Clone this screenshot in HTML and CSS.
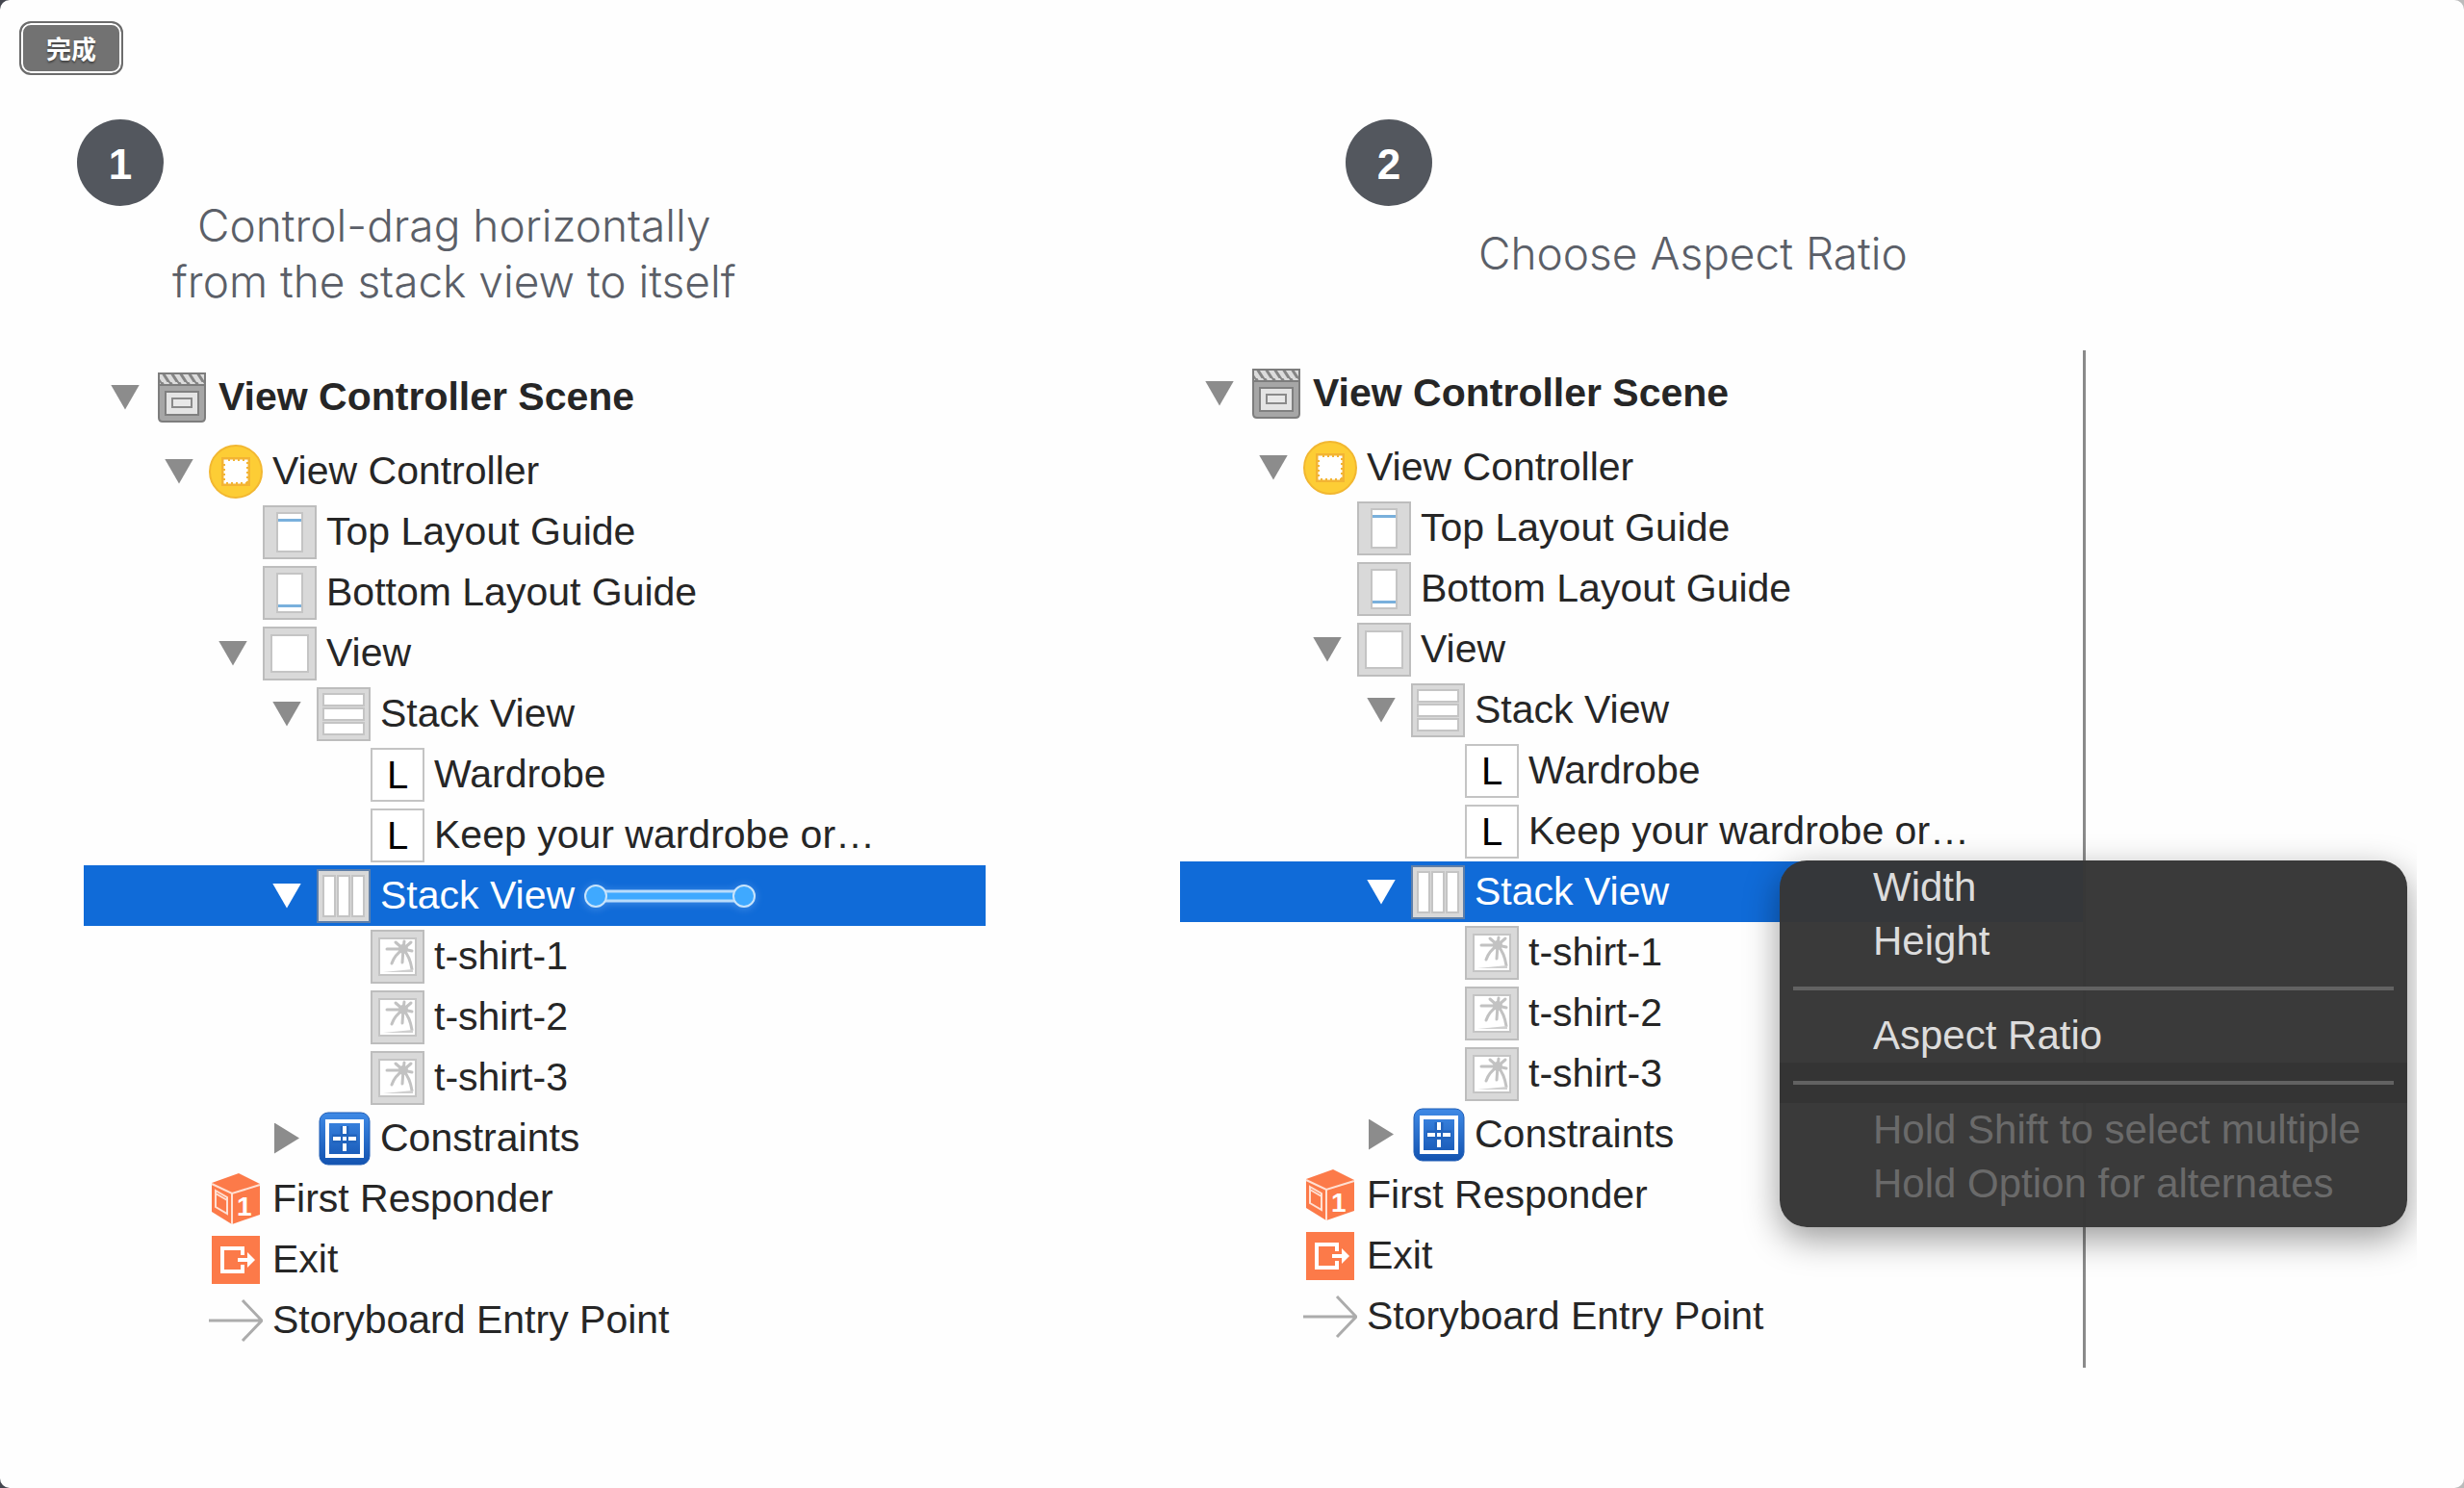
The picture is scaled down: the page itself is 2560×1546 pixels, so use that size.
FILE: index.html
```
<!DOCTYPE html>
<html lang="zh-CN">
<head>
  <meta charset="UTF-8">
  <meta name="viewport" content="width=device-width, initial-scale=1.0">
  <title>Aspect Ratio</title>
  <link rel="stylesheet" href="styles.css">
</head>
<body>
  <!-- Icon set -->
  <svg class="sprite" width="0" height="0" aria-hidden="true">
    <defs>
      <linearGradient id="blue" x1="0" y1="0" x2="0" y2="1">
        <stop offset="0" stop-color="#3f8ae6"/>
        <stop offset="1" stop-color="#1353b0"/>
      </linearGradient>
      <pattern id="stripes" width="9" height="12" patternUnits="userSpaceOnUse">
        <rect width="9" height="12" fill="#dcdcdc"/>
        <path d="M-3 -1 L6 13 M6 -1 L15 13" stroke="#858585" stroke-width="3"/>
      </pattern>
    </defs>
    <symbol id="i-scene" viewBox="0 0 56 56">
      <path d="M4 3h48v46q0 4-4 4H8q-4 0-4-4z" fill="#a6a6a6" stroke="#7d7d7d" stroke-width="2"/>
      <rect x="5" y="4" width="46" height="10" fill="url(#stripes)"/>
      <path d="M4 3h48M4 15h48" stroke="#7d7d7d" stroke-width="2"/>
      <rect x="11" y="22" width="34" height="24" fill="#e4e4e4" stroke="#808080" stroke-width="2"/>
      <rect x="18" y="29" width="20" height="9" fill="#e8e8e8" stroke="#8a8a8a" stroke-width="2"/>
    </symbol>
    <symbol id="i-controller" viewBox="0 0 56 56">
      <circle cx="28" cy="28" r="27" fill="#fdcd35" stroke="#f2b731" stroke-width="2"/>
      <rect x="13" y="13" width="30" height="30" fill="#f3b433"/>
      <rect x="17" y="17" width="22" height="22" fill="#fff" stroke="#fff" stroke-width="3" stroke-dasharray="3 2"/>
    </symbol>
    <symbol id="i-top" viewBox="0 0 56 56">
      <rect x="1" y="1" width="54" height="54" fill="#d9d9d9" stroke="#bdbdbd" stroke-width="2"/>
      <rect x="15" y="8" width="26" height="40" fill="#fff" stroke="#c4c4c4" stroke-width="2"/>
      <rect x="16" y="14" width="24" height="3" fill="#79b0dc"/>
    </symbol>
    <symbol id="i-bottom" viewBox="0 0 56 56">
      <rect x="1" y="1" width="54" height="54" fill="#d9d9d9" stroke="#bdbdbd" stroke-width="2"/>
      <rect x="15" y="8" width="26" height="40" fill="#fff" stroke="#c4c4c4" stroke-width="2"/>
      <rect x="16" y="40" width="24" height="3" fill="#79b0dc"/>
    </symbol>
    <symbol id="i-view" viewBox="0 0 56 56">
      <rect x="1" y="1" width="54" height="54" fill="#d9d9d9" stroke="#bdbdbd" stroke-width="2"/>
      <rect x="9" y="9" width="38" height="38" fill="#fff" stroke="#c4c4c4" stroke-width="2"/>
    </symbol>
    <symbol id="i-vstack" viewBox="0 0 56 56">
      <rect x="1" y="1" width="54" height="54" fill="#d9d9d9" stroke="#bdbdbd" stroke-width="2"/>
      <g fill="#fff" stroke="#c4c4c4" stroke-width="2">
        <rect x="7" y="7" width="42" height="12"/>
        <rect x="7" y="22" width="42" height="12"/>
        <rect x="7" y="37" width="42" height="12"/>
      </g>
    </symbol>
    <symbol id="i-hstack" viewBox="0 0 56 56">
      <rect x="1" y="1" width="54" height="54" fill="#d9d9d9" stroke="#5f7fa8" stroke-width="2"/>
      <g fill="#fff" stroke="#c4c4c4" stroke-width="2">
        <rect x="7" y="7" width="12" height="42"/>
        <rect x="22" y="7" width="12" height="42"/>
        <rect x="37" y="7" width="12" height="42"/>
      </g>
    </symbol>
    <symbol id="i-image" viewBox="0 0 56 56">
      <rect x="1" y="1" width="54" height="54" fill="#d9d9d9" stroke="#bdbdbd" stroke-width="2"/>
      <rect x="9" y="9" width="38" height="38" fill="#fff" stroke="#c4c4c4" stroke-width="2"/>
      <g fill="none" stroke="#c2c2c2" stroke-width="3" stroke-linecap="round">
        <path d="M34 20L17 20M34 20L26 13M34 20L35 12M34 20L42 13M34 20L43 22M34 20Q25 26 22 35M34 20L33 34"/>
        <path d="M34 20Q41 28 43 41"/>
      </g>
      <circle cx="34" cy="20" r="5" fill="#c2c2c2"/>
      <path d="M13 44L44 41V44z" fill="#cfcfcf"/>
    </symbol>
    <symbol id="i-constraints" viewBox="0 0 56 56">
      <rect x="3" y="1" width="52" height="54" rx="9" fill="url(#blue)" stroke="#1f5cb5"/>
      <rect x="11" y="10" width="36" height="36" fill="none" stroke="#fff" stroke-width="4"/>
      <path d="M16 28h26M29 15v26" stroke="#2264bd" stroke-width="9"/>
      <path d="M17 28h8M33 28h8M29 15v8M29 33v8M27 28h4" stroke="#fff" stroke-width="4"/>
    </symbol>
    <symbol id="i-responder" viewBox="0 0 56 56">
      <path d="M31 1L53 12V44L24 54L3 41V11z" fill="#fc7a49"/>
      <path d="M3 12L24 22L53 13M24 22V54" fill="none" stroke="#ffe0d3" stroke-width="2"/>
      <path d="M7 19L19 26V43L7 36zM7 22L19 29" fill="none" stroke="#ffe0d3" stroke-width="2"/>
      <text x="29" y="45" class="cube-digit">1</text>
    </symbol>
    <symbol id="i-exit" viewBox="0 0 56 56">
      <rect x="3" y="3" width="50" height="50" fill="#fc7a49"/>
      <path d="M35 23V16H14V40H35V33" fill="none" stroke="#fff" stroke-width="4"/>
      <path d="M30 26H40V20L48 28L40 36V30H30z" fill="#fff"/>
    </symbol>
    <symbol id="i-entry" viewBox="0 0 56 56">
      <path d="M0 28H54M35 7L55 28L35 49" fill="none" stroke="#acacac" stroke-width="3"/>
    </symbol>
  </svg>

  <main class="page">
    <div class="toolbar">
      <button class="done">完成</button>
    </div>

    <div class="steps">
      <section class="step">
        <header class="step-header">
          <span class="badge">1</span>
          <h2 class="caption">Control-drag horizontally<br>from the stack view to itself</h2>
        </header>
        <ul class="tree">
          <li class="row scene"><button class="toggle" aria-label="Collapse"></button><svg class="icon"><use href="#i-scene"/></svg><span>View Controller Scene</span></li>
          <li class="row d1"><button class="toggle" aria-label="Collapse"></button><svg class="icon"><use href="#i-controller"/></svg><span>View Controller</span></li>
          <li class="row d2 leaf"><svg class="icon"><use href="#i-top"/></svg><span>Top Layout Guide</span></li>
          <li class="row d2 leaf"><svg class="icon"><use href="#i-bottom"/></svg><span>Bottom Layout Guide</span></li>
          <li class="row d2"><button class="toggle" aria-label="Collapse"></button><svg class="icon"><use href="#i-view"/></svg><span>View</span></li>
          <li class="row d3"><button class="toggle" aria-label="Collapse"></button><svg class="icon"><use href="#i-vstack"/></svg><span>Stack View</span></li>
          <li class="row d4 leaf"><span class="icon label-icon">L</span><span>Wardrobe</span></li>
          <li class="row d4 leaf"><span class="icon label-icon">L</span><span>Keep your wardrobe or…</span></li>
          <li class="row d3 selected">
            <button class="toggle" aria-label="Collapse"></button><svg class="icon"><use href="#i-hstack"/></svg><span>Stack View</span>
            <svg class="drag-line" viewBox="0 0 178 26">
              <rect x="12" y="8" width="154" height="10" fill="#3fa9ff" stroke="#b9dcfb" stroke-width="3"/>
              <circle cx="12" cy="13" r="11" fill="#3fa9ff" stroke="#c9e4fb" stroke-width="2"/>
              <circle cx="166" cy="13" r="11" fill="#3fa9ff" stroke="#c9e4fb" stroke-width="2"/>
            </svg>
          </li>
          <li class="row d4 leaf"><svg class="icon"><use href="#i-image"/></svg><span>t-shirt-1</span></li>
          <li class="row d4 leaf"><svg class="icon"><use href="#i-image"/></svg><span>t-shirt-2</span></li>
          <li class="row d4 leaf"><svg class="icon"><use href="#i-image"/></svg><span>t-shirt-3</span></li>
          <li class="row d3"><button class="toggle closed" aria-label="Expand"></button><svg class="icon"><use href="#i-constraints"/></svg><span>Constraints</span></li>
          <li class="row d1 leaf"><svg class="icon"><use href="#i-responder"/></svg><span>First Responder</span></li>
          <li class="row d1 leaf"><svg class="icon"><use href="#i-exit"/></svg><span>Exit</span></li>
          <li class="row d1 leaf"><svg class="icon"><use href="#i-entry"/></svg><span>Storyboard Entry Point</span></li>
        </ul>
      </section>

      <section class="step step-menu">
        <header class="step-header">
          <span class="badge">2</span>
          <h2 class="caption">Choose Aspect Ratio</h2>
        </header>
        <ul class="tree">
          <li class="row scene"><button class="toggle" aria-label="Collapse"></button><svg class="icon"><use href="#i-scene"/></svg><span>View Controller Scene</span></li>
          <li class="row d1"><button class="toggle" aria-label="Collapse"></button><svg class="icon"><use href="#i-controller"/></svg><span>View Controller</span></li>
          <li class="row d2 leaf"><svg class="icon"><use href="#i-top"/></svg><span>Top Layout Guide</span></li>
          <li class="row d2 leaf"><svg class="icon"><use href="#i-bottom"/></svg><span>Bottom Layout Guide</span></li>
          <li class="row d2"><button class="toggle" aria-label="Collapse"></button><svg class="icon"><use href="#i-view"/></svg><span>View</span></li>
          <li class="row d3"><button class="toggle" aria-label="Collapse"></button><svg class="icon"><use href="#i-vstack"/></svg><span>Stack View</span></li>
          <li class="row d4 leaf"><span class="icon label-icon">L</span><span>Wardrobe</span></li>
          <li class="row d4 leaf"><span class="icon label-icon">L</span><span>Keep your wardrobe or…</span></li>
          <li class="row d3 selected"><button class="toggle" aria-label="Collapse"></button><svg class="icon"><use href="#i-hstack"/></svg><span>Stack View</span></li>
          <li class="row d4 leaf"><svg class="icon"><use href="#i-image"/></svg><span>t-shirt-1</span></li>
          <li class="row d4 leaf"><svg class="icon"><use href="#i-image"/></svg><span>t-shirt-2</span></li>
          <li class="row d4 leaf"><svg class="icon"><use href="#i-image"/></svg><span>t-shirt-3</span></li>
          <li class="row d3"><button class="toggle closed" aria-label="Expand"></button><svg class="icon"><use href="#i-constraints"/></svg><span>Constraints</span></li>
          <li class="row d1 leaf"><svg class="icon"><use href="#i-responder"/></svg><span>First Responder</span></li>
          <li class="row d1 leaf"><svg class="icon"><use href="#i-exit"/></svg><span>Exit</span></li>
          <li class="row d1 leaf"><svg class="icon"><use href="#i-entry"/></svg><span>Storyboard Entry Point</span></li>
        </ul>
        <div class="menu">
          <button>Width</button>
          <button>Height</button>
          <div class="separator"></div>
          <button>Aspect Ratio</button>
          <div class="separator dim"></div>
          <button disabled>Hold Shift to select multiple</button>
          <button disabled>Hold Option for alternates</button>
        </div>
      </section>
    </div>
  </main>
</body>
</html>
```
FILE: styles.css
```
* {
  box-sizing: border-box;
}

html {
  background: linear-gradient(to right, #44464f, #bbbbbb);
}

body {
  margin: 0;
  font-family: "Liberation Sans", Arial, sans-serif;
  color: #262626;
}

.sprite {
  position: absolute;
}

.page {
  min-height: 100vh;
  background-color: #fefefe;
  border-radius: 10px;
}

.toolbar {
  padding: 22px 20px 46px;
}

.done {
  display: block;
  padding: 0 26px;
  background-color: #727272;
  color: #fff;
  border: 2px solid #6c6c6c;
  border-radius: 12px;
  box-shadow: inset 0 0 0 2px #fff;
  font-family: "Noto Sans CJK SC", sans-serif;
  font-size: 26px;
  font-weight: bold;
  line-height: 52px;
  text-shadow: 0 2px 2px rgba(0, 0, 0, 0.4);
  cursor: pointer;
}

.steps {
  display: grid;
  grid-template-columns: 944fr 1285fr;
  gap: 202px;
  padding: 0 49px 0 80px;
}

.step-header {
  display: flex;
  align-items: flex-start;
  gap: 9px;
}

.badge {
  width: 90px;
  height: 90px;
  border-radius: 50%;
  background-color: #53575e;
  color: #fff;
  font-size: 44px;
  font-weight: bold;
  line-height: 94px;
  text-align: center;
}

.caption {
  display: flex;
  align-items: center;
  min-height: 116px;
  margin: 81px 0 0;
  font-family: Inter, sans-serif;
  font-size: 46px;
  font-weight: 300;
  line-height: 58px;
  text-align: center;
  color: #5b5f68;
}

.tree {
  --inset: 18px;
  list-style: none;
  margin: 60px 0 0 7px;
  padding: 0;
  font-size: 41px;
}

.row {
  display: flex;
  align-items: center;
  height: 63px;
  padding-left: var(--inset);
  white-space: nowrap;
}

.row.scene {
  margin-bottom: 14px;
  font-weight: bold;
}

.row.d1 {
  padding-left: calc(var(--inset) + 56px);
}

.row.d2 {
  padding-left: calc(var(--inset) + 112px);
}

.row.d3 {
  padding-left: calc(var(--inset) + 168px);
}

.row.d4 {
  padding-left: calc(var(--inset) + 224px);
}

.row.selected {
  background-color: #106bd8;
  color: #fff;
}

.toggle {
  display: flex;
  justify-content: center;
  width: 50px;
  margin-right: 6px;
  padding: 0;
  border: none;
  background: none;
  color: #8c8c8c;
  cursor: pointer;
}

.toggle::before {
  content: "";
  width: 30px;
  height: 26px;
  background-color: currentColor;
  clip-path: polygon(0 0, 100% 0, 50% 100%);
}

.toggle.closed::before {
  width: 26px;
  height: 32px;
  clip-path: polygon(0 0, 100% 50%, 0 100%);
}

.selected .toggle {
  color: #fff;
}

.icon {
  flex: none;
  width: 56px;
  height: 56px;
  margin-right: 10px;
}

.leaf .icon {
  margin-left: 56px;
}

.label-icon {
  border: 2px solid #c4c4c4;
  background-color: #fff;
  color: #000;
  font-size: 40px;
  line-height: 52px;
  text-align: center;
}

.cube-digit {
  font-size: 28px;
  font-weight: bold;
  fill: #fff;
}

.drag-line {
  width: 178px;
  height: 26px;
  margin-left: 10px;
  filter: drop-shadow(0 1px 4px rgba(150, 200, 255, 0.4));
}

/* Second step: split line on the right and the constraint menu above it */
.step-menu {
  position: relative;
  overflow: hidden;
}

.step-menu .step-header {
  gap: 48px;
  padding-left: 172px;
}

.step-menu .tree {
  --inset: 16px;
  margin: 43px 344px 0 0;
  padding: 13px 0 22px;
  border-right: 3px solid #8a8a8a;
}

.menu {
  position: absolute;
  top: 770px;
  right: 10px;
  width: 652px;
  height: 381px;
  background-color: rgba(54, 54, 54, 0.98);
  border-radius: 28px;
  box-shadow: 0 12px 36px rgba(0, 0, 0, 0.4);
}

.menu button {
  display: block;
  width: 100%;
  height: 56px;
  padding: 0 0 0 97px;
  border: none;
  background: none;
  color: #dcdcdc;
  font-family: inherit;
  font-size: 42px;
  line-height: 56px;
  text-align: left;
  white-space: nowrap;
}

.menu button:disabled {
  color: #6a6a6a;
}

.separator {
  height: 42px;
  padding: 19px 14px;
}

.separator::before {
  content: "";
  display: block;
  height: 4px;
  background-color: #626262;
}

.separator.dim {
  background-color: #343434;
}
```
